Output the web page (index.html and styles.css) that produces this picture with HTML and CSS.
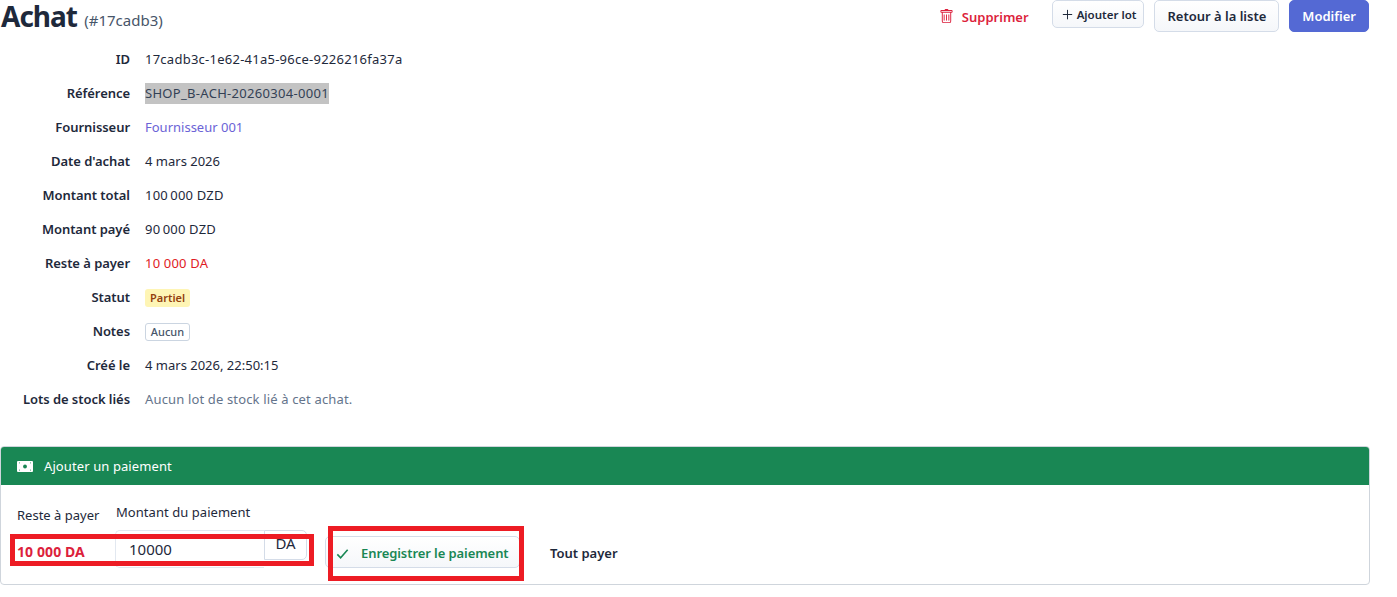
FILE: index.html
```html
<!DOCTYPE html>
<html lang="fr">
<head>
<meta charset="utf-8">
<title>Achat</title>
<link rel="stylesheet" href="styles.css">
</head>
<body>
<header class="top">
  <h1 class="title"><span class="title-main">Achat</span> <small class="title-id">(#17cadb3)</small></h1>
  <div class="actions">
    <button class="btn btn-del"><svg class="ico" viewBox="0 0 16 16" fill="currentColor"><path d="M5.5 5.500A.5.5 0 0 1 6 6v6a.5.5 0 0 1-1 0V6a.5.5 0 0 1 .5-.5m2.500 0a.5.5 0 0 1 .5.5v6a.5.5 0 0 1-1 0V6a.5.5 0 0 1 .5-.5m3 .5a.5.5 0 0 0-1 0v6a.5.5 0 0 0 1 0z"/><path d="M14.500 3a1 1 0 0 1-1 1H13v9a2 2 0 0 1-2 2H5a2 2 0 0 1-2-2V4h-.5a1 1 0 0 1-1-1V2a1 1 0 0 1 1-1H6a1 1 0 0 1 1-1h2a1 1 0 0 1 1 1h3.500a1 1 0 0 1 1 1zM4.118 4 4 4.059V13a1 1 0 0 0 1 1h6a1 1 0 0 0 1-1V4.059L11.882 4zM2.500 3h11V2h-11z"/></svg>Supprimer</button>
    <button class="btn btn-lot"><svg class="ico-plus" viewBox="0 0 16 16" fill="currentColor"><path d="M8 2a.6.6 0 0 1 .6.6v4.800h4.800a.6.6 0 0 1 0 1.200H8.600v4.800a.6.6 0 0 1-1.200 0V8.600H2.600a.6.6 0 0 1 0-1.200h4.800V2.600A.6.6 0 0 1 8 2"/></svg>Ajouter lot</button>
    <button class="btn btn-back">Retour à la liste</button>
    <button class="btn btn-edit">Modifier</button>
  </div>
</header>

<dl class="info">
  <dt>ID</dt><dd class="code-id">17cadb3c-1e62-41a5-96ce-9226216fa37a</dd>
  <dt>Référence</dt><dd><span class="selected">SHOP_B-ACH-20260304-0001</span></dd>
  <dt>Fournisseur</dt><dd class="link">Fournisseur 001</dd>
  <dt>Date d'achat</dt><dd>4 mars 2026</dd>
  <dt>Montant total</dt><dd class="money">100&#8239;000 DZD</dd>
  <dt>Montant payé</dt><dd class="money">90&#8239;000 DZD</dd>
  <dt>Reste à payer</dt><dd class="danger">10 000 DA</dd>
  <dt>Statut</dt><dd><span class="badge badge-warn">Partiel</span></dd>
  <dt>Notes</dt><dd><span class="badge badge-line">Aucun</span></dd>
  <dt>Créé le</dt><dd>4 mars 2026, 22:50:15</dd>
  <dt>Lots de stock liés</dt><dd class="muted">Aucun lot de stock lié à cet achat.</dd>
</dl>

<section class="card">
  <div class="card-head"><svg class="ico-cash" viewBox="0 0 16 11"><rect width="16" height="11" rx="1" fill="currentColor"/><circle cx="8" cy="5.500" r="1.900" fill="#198754"/><path fill="#198754" d="M2 1.500h1a1 1 0 0 1-1 1zM14 1.500h-1a1 1 0 0 0 1 1zM2 9.500h1a1 1 0 0 0-1-1zM14 9.500h-1a1 1 0 0 1 1-1z"/></svg>Ajouter un paiement</div>
  <div class="card-body">
    <div class="field field-due">
      <span class="label">Reste à payer</span>
      <strong class="due">10 000 DA</strong>
    </div>
    <div class="field field-amount">
      <label class="label label-amount" for="amount">Montant du paiement</label>
      <div class="group">
        <input id="amount" class="amount" value="10000">
        <span class="unit">DA</span>
      </div>
    </div>
    <button class="btn-save"><svg class="ico-check" viewBox="0 0 16 16" fill="none" stroke="currentColor" stroke-width="1.700"><path d="M2.500 9l3.500 3.500 7.500-8.500"/></svg>Enregistrer le paiement</button>
    <button class="btn-all">Tout payer</button>
    <span class="mark mark-left"></span>
    <span class="mark mark-right"></span>
  </div>
</section>
</body>
</html>
```
FILE: styles.css
```css
* { box-sizing: border-box; }
html, body { margin: 0; padding: 0; }
body {
  width: 1397px;
  height: 597px;
  overflow: hidden;
  background: #fff;
  color: #1e293b;
  font-family: "Noto Sans", "Open Sans", sans-serif;
  font-size: 13px;
  padding-right: 28px;
}
button { font-family: inherit; cursor: pointer; }

.top { display: flex; justify-content: space-between; align-items: flex-start; height: 42px; }
.title { margin: 0; padding-left: 1px; font-size: 28px; line-height: 33px; font-weight: 700; color: #1e293b; }
.title-main { letter-spacing: -1px; }
.title-id { font-size: 15px; font-weight: 400; color: #475569; position: relative; top: -1px; }

.actions { display: flex; align-items: flex-start; gap: 10px; }
.btn { border-radius: 5px; border: 1px solid #d4dce8; background: linear-gradient(#fff, #f5f7fa); color: #1e293b; font-weight: 600; font-size: 13px; height: 32px; padding: 0 12px; display: inline-flex; align-items: center; }
.btn-del { background: none; border-color: transparent; color: #dc1f3c; padding: 0 12px; height: 33px; }
.ico { width: 15px; height: 15px; margin-right: 8px; }
.btn-lot { height: 28px; font-size: 11.5px; padding: 0 7px 0 8px; }
.ico-plus { width: 13px; height: 13px; margin-right: 3px; }
.btn-edit { background: #5469d4; border-color: #5469d4; color: #fff; }

.info { display: grid; grid-template-columns: 130px 1fr; column-gap: 15px; margin: 0; grid-auto-rows: 34px; }
.info dt { text-align: right; font-weight: 600; line-height: 34px; letter-spacing: -0.05px; }
.info dd { margin: 0; line-height: 34px; }
.code-id { letter-spacing: 0.25px; }
.selected { background: #c3c3c3; display: inline-block; line-height: 21px; letter-spacing: 0.3px; color: #334155; }
.link { color: #6b63d6; }
.money { letter-spacing: 0.2px; }
.danger { color: #e01b24; letter-spacing: 0.2px; }
.muted { color: #64748b; letter-spacing: 0.15px; }
.badge { display: inline-block; width: 45px; text-align: center; font-size: 11px; line-height: 18px; border-radius: 3px; }
.badge-warn { background: #fef5b5; color: #92400e; font-weight: 600; }
.badge-line { border: 1px solid #cbd5e1; line-height: 16px; color: #475569; font-weight: 500; }

.card { margin-top: 30px; width: 1370px; height: 139px; border: 1px solid #cfd5dc; border-radius: 4px; }
.card-head { height: 38px; background: #198754; color: #fff; display: flex; align-items: center; padding-left: 16px; font-size: 13px; letter-spacing: 0.1px; border-radius: 3px 3px 0 0; }
.ico-cash { width: 16px; height: 11px; margin-right: 11px; }
.card-body { position: relative; display: flex; align-items: flex-end; padding: 0 16px 16px; height: 99px; }
.field { display: flex; flex-direction: column; }
.label { font-size: 13px; color: #1e293b; }
.field-due { width: 98px; }
.field-due .label { margin-bottom: 18px; }
.due { color: #dc1f3c; font-weight: 700; font-size: 14px; letter-spacing: 0.1px; line-height: 19px; margin-bottom: 7px; }
.field-amount { width: 193px; }
.field-amount .label { margin-bottom: 9px; }
.label-amount { padding-left: 1px; letter-spacing: 0.05px; }
.group { display: flex; height: 38px; width: 192px; }
.amount { width: 149px; border: 1px solid #e2e8f0; border-radius: 5px 0 0 5px; border-right: 0; padding: 0 13px; font: 15px "Noto Sans", sans-serif; color: #1e293b; }
.unit { width: 44px; height: 30px; border: 1px solid #d4dce8; border-radius: 0 5px 5px 0; text-align: center; font-size: 15px; line-height: 24px; }
.btn-save { margin-left: 17px; height: 32px; width: 195px; border: 1px solid #d4dce8; border-radius: 5px; background: linear-gradient(#fff, #f5f7fa); color: #198754; font-weight: 600; font-size: 13px; letter-spacing: -0.08px; display: inline-flex; align-items: center; padding: 2px 0 0 9px; }
.ico-check { width: 15px; height: 15px; margin-right: 11px; }
.btn-all { margin-left: 18px; height: 32px; border: 0; background: none; color: #1e293b; font-weight: 600; font-size: 13px; padding: 2px 12px 0; }
.mark { position: absolute; border: 5px solid #ed1c24; pointer-events: none; }
.mark-left { left: 9px; top: 49px; width: 304px; height: 32px; }
.mark-right { left: 327px; top: 41px; width: 196px; height: 55px; }
```
